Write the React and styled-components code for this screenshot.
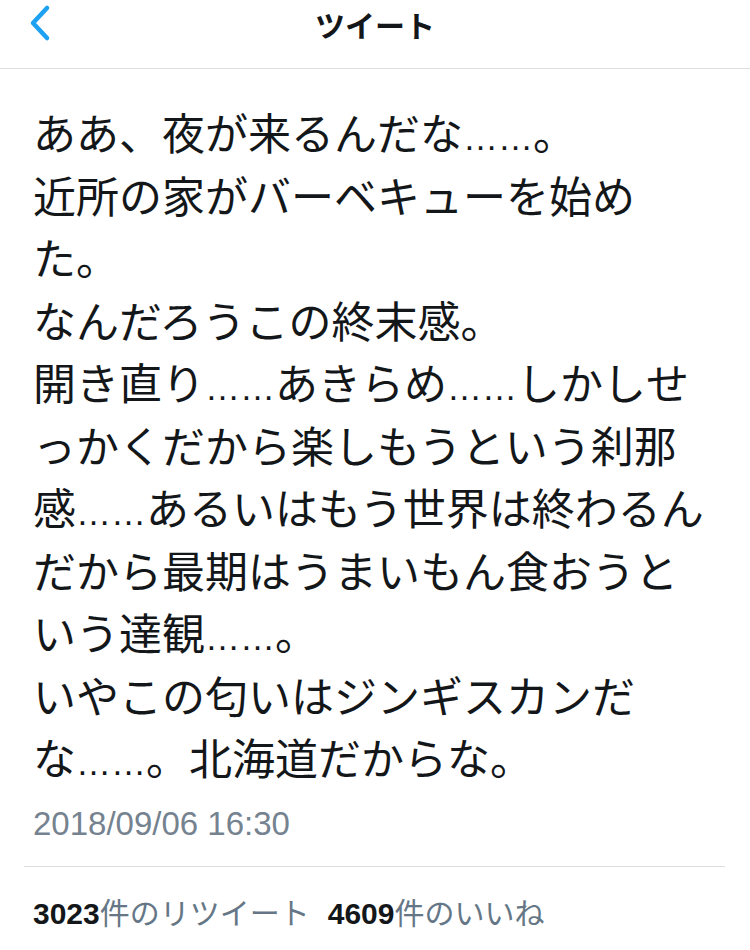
import React from 'react';
import styled, { createGlobalStyle } from 'styled-components';

const GlobalStyle = createGlobalStyle`
  html, body {
    margin: 0;
    padding: 0;
    background: #ffffff;
  }

  body {
    font-family: "Noto Sans CJK JP", "Noto Sans", sans-serif;
    color: #14171a;
  }
`;

const Page = styled.div`
  width: 750px;
  min-height: 950px;
  background: #ffffff;
`;

const Header = styled.header`
  position: relative;
  height: 68px;
  border-bottom: 1px solid #dcdfe2;
  display: flex;
  align-items: flex-start;
  justify-content: center;
`;

const BackButton = styled.button`
  position: absolute;
  left: 24px;
  top: 3px;
  width: 30px;
  height: 40px;
  padding: 0;
  border: none;
  background: transparent;
  display: flex;
  align-items: center;
  justify-content: center;
`;

const Title = styled.h1`
  margin: 0;
  padding-top: 4px;
  font-size: 30px;
  line-height: 40px;
  font-weight: 700;
  color: #14171a;
`;

const Body = styled.main`
  padding: 31px 20px 0 33px;
`;

const TweetText = styled.p`
  margin: 0;
  font-size: 43px;
  line-height: 62.5px;
  font-weight: 400;
  white-space: pre-line;
  color: #14171a;
`;

const Dots = styled.span`
  font-family: "Liberation Sans", sans-serif;
  font-size: 35px;
  line-height: 1;
`;

const Timestamp = styled.div`
  margin-top: 18px;
  font-family: "Liberation Sans", "Noto Sans CJK JP", sans-serif;
  font-size: 33px;
  line-height: 36px;
  color: #75828f;
`;

const Divider = styled.hr`
  margin: 24px 5px 0 -9px;
  border: none;
  border-top: 1px solid #dcdfe2;
`;

const Stats = styled.div`
  display: flex;
  gap: 18px;
  padding: 26px 0 20px;
  font-size: 30px;
  line-height: 36px;
  color: #657786;
`;

const Stat = styled.span`
  white-space: nowrap;
`;

const Count = styled.b`
  font-family: "Liberation Sans", sans-serif;
  font-weight: 700;
  color: #14171a;
`;

const ChevronLeft = () => (
  <svg width="26" height="40" viewBox="0 0 26 40" fill="none">
    <path d="M21 5 L7 20 L21 35" stroke="#1da1f2" strokeWidth="4.5" strokeLinecap="round" strokeLinejoin="round" />
  </svg>
);

const D = () => <Dots>……</Dots>;

export default function App() {
  return (
    <Page>
      <GlobalStyle />
      <Header>
        <BackButton aria-label="戻る">
          <ChevronLeft />
        </BackButton>
        <Title>ツイート</Title>
      </Header>
      <Body>
        <TweetText>
          ああ、夜が来るんだな<D />。{'\n'}
          近所の家がバーベキューを始め{'\n'}
          た。{'\n'}
          なんだろうこの終末感。{'\n'}
          開き直り<D />あきらめ<D />しかしせ{'\n'}
          っかくだから楽しもうという刹那{'\n'}
          感<D />あるいはもう世界は終わるん{'\n'}
          だから最期はうまいもん食おうと{'\n'}
          いう達観<D />。{'\n'}
          いやこの匂いはジンギスカンだ{'\n'}
          な<D />。北海道だからな。
        </TweetText>
        <Timestamp>2018/09/06 16:30</Timestamp>
        <Divider />
        <Stats>
          <Stat><Count>3023</Count>件のリツイート</Stat>
          <Stat><Count>4609</Count>件のいいね</Stat>
        </Stats>
      </Body>
    </Page>
  );
}
